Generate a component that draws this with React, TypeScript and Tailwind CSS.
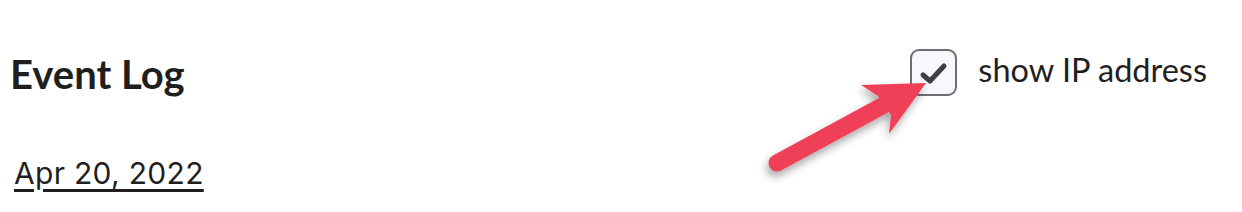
import React from 'react';

export default function App() {
  return (
    <div className="relative w-[1242px] h-[212px] bg-white overflow-hidden">
      <div className="flex items-center justify-between pl-[10px] pr-[35px] pt-[45px]">
        <h1 className="font-['Lato',sans-serif] font-bold text-[40px] leading-[52px] mt-[3px] text-[#1f1f1f]">Event Log</h1>
        <label className="flex items-center gap-[21px]">
          <span className="w-[47px] h-[47px] rounded-[9px] border-2 border-[#6b6e75] bg-[#f6f8fc] flex items-center justify-center">
            <svg width="32" height="26" viewBox="0 0 32 26" fill="none">
              <path d="M5 15 L12 21 L26 6" stroke="#3c3f45" strokeWidth="5" strokeLinecap="round" strokeLinejoin="round" />
            </svg>
          </span>
          <span className="font-['Lato',sans-serif] text-[32.5px] leading-[40px] mb-[5px] text-[#1f1f1f]">show IP address</span>
        </label>
      </div>
      <div className="pl-[14px] pt-[53px]">
        <a className="font-['Inter',sans-serif] text-[30px] tracking-[0.3px] leading-[40px] text-[#1f1f1f] underline underline-offset-[5px] decoration-[3px]">Apr 20, 2022</a>
      </div>
      <svg className="absolute left-0 top-0 pointer-events-none" width="1242" height="212" viewBox="0 0 1242 212">
        <defs>
          <filter id="sh" x="-20%" y="-20%" width="140%" height="160%">
            <feDropShadow dx="-2" dy="5" stdDeviation="4" floodColor="#000" floodOpacity="0.35" />
          </filter>
        </defs>
        <g filter="url(#sh)" fill="#ef4058">
          <line x1="777" y1="163" x2="884" y2="105" stroke="#ef4058" strokeWidth="17" strokeLinecap="round" />
          <path d="M926 83 L861 85 L878 96 L891 115 L889 134 Z" />
        </g>
      </svg>
    </div>
  );
}
